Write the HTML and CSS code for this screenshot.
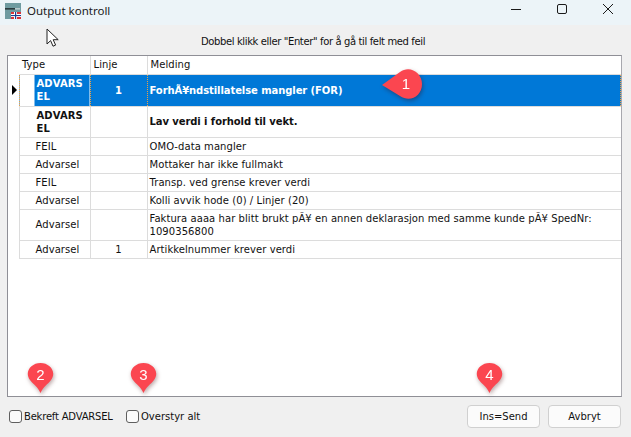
FILE: index.html
```html
<!DOCTYPE html>
<html lang="no">
<head>
<meta charset="utf-8">
<title>Output kontroll</title>
<link rel="stylesheet" href="styles.css">
</head>
<body>
<div class="window">
  <header class="titlebar">
    <svg class="app-icon" width="16" height="16" viewBox="0 0 16 16">
      <rect width="16" height="16" fill="#6f9ba0"/>
      <rect x="0" y="5" width="10" height="1.6" fill="#2b3a3d"/>
      <rect x="10" y="5" width="5" height="1.6" fill="#b8c8ca"/>
      <rect x="6" y="9" width="10" height="7" fill="#d8353a"/>
      <rect x="9" y="9" width="3" height="7" fill="#fff"/>
      <rect x="6" y="11" width="10" height="3" fill="#fff"/>
      <rect x="10" y="9" width="1.2" height="7" fill="#1d3f8f"/>
      <rect x="6" y="12" width="10" height="1.1" fill="#1d3f8f"/>
    </svg>
    <span class="title">Output kontroll</span>
    <div class="controls">
      <svg class="ctl" width="46" height="25" viewBox="0 0 46 25"><path d="M18 9.5h10" stroke="#1a1a1a" fill="none"/></svg>
      <svg class="ctl" width="46" height="25" viewBox="0 0 46 25"><rect x="18.5" y="4.5" width="9" height="9" rx="1.5" stroke="#1a1a1a" fill="none"/></svg>
      <svg class="ctl" width="46" height="25" viewBox="0 0 46 25"><path d="M18 4l10 10M28 4l-10 10" stroke="#1a1a1a" fill="none"/></svg>
    </div>
  </header>
  <main class="content">
    <p class="hint">Dobbel klikk eller "Enter" for å gå til felt med feil</p>
    <section class="panel">
      <table class="grid">
        <colgroup><col class="c-h"><col class="c-type"><col class="c-line"><col></colgroup>
        <thead>
          <tr><th class="rowhead"></th><th>Type</th><th>Linje</th><th>Melding</th></tr>
        </thead>
        <tbody>
          <tr class="r-sel"><td class="rowhead"><span class="arrow"></span></td><td class="type">ADVARS<br>EL</td><td class="line">1</td><td>ForhÃ¥ndstillatelse mangler (FOR)</td></tr>
          <tr class="r-bold"><td class="rowhead"></td><td class="type">ADVARS<br>EL</td><td class="line"></td><td>Lav verdi i forhold til vekt.</td></tr>
          <tr><td class="rowhead"></td><td class="type">FEIL</td><td class="line"></td><td>OMO-data mangler</td></tr>
          <tr><td class="rowhead"></td><td class="type">Advarsel</td><td class="line"></td><td>Mottaker har ikke fullmakt</td></tr>
          <tr><td class="rowhead"></td><td class="type">FEIL</td><td class="line"></td><td>Transp. ved grense krever verdi</td></tr>
          <tr><td class="rowhead"></td><td class="type">Advarsel</td><td class="line"></td><td>Kolli avvik hode (0) / Linjer (20)</td></tr>
          <tr class="r-tall"><td class="rowhead"></td><td class="type">Advarsel</td><td class="line"></td><td>Faktura aaaa har blitt brukt pÃ¥ en annen deklarasjon med samme kunde pÃ¥ SpedNr:<br>1090356800</td></tr>
          <tr><td class="rowhead"></td><td class="type">Advarsel</td><td class="line">1</td><td>Artikkelnummer krever verdi</td></tr>
        </tbody>
      </table>
    </section>
    <footer class="actions">
      <label class="check c-a"><span class="box"></span>Bekreft ADVARSEL</label>
      <label class="check"><span class="box"></span>Overstyr alt</label>
      <span class="spacer"></span>
      <button class="btn">Ins=Send</button>
      <button class="btn">Avbryt</button>
    </footer>
  </main>

  <svg class="cursor" width="14" height="20" viewBox="0 0 14 20"><path d="M1 1v15l3.6-3.4 2.4 5.6 2.6-1.1-2.4-5.4h5z" fill="#fff" stroke="#222"/></svg>

  <div class="callout"><svg width="40" height="32" viewBox="0 0 40 32"><path d="M0 17 L18 4 C28 -3 40 5 40 16 C40 28 28 35 18 28 Z" fill="#fb4650"/></svg><span>1</span></div>
  <div class="pin p2"><svg width="27" height="30" viewBox="0 0 27 30"><path d="M13.5 30 C11 24 6 21 3 17 C-3 9 4 0 13.5 0 C23 0 30 9 24 17 C21 21 16 24 13.5 30 Z" fill="#fb4650"/></svg><span>2</span></div>
  <div class="pin p3"><svg width="27" height="30" viewBox="0 0 27 30"><path d="M13.5 30 C11 24 6 21 3 17 C-3 9 4 0 13.5 0 C23 0 30 9 24 17 C21 21 16 24 13.5 30 Z" fill="#fb4650"/></svg><span>3</span></div>
  <div class="pin p4"><svg width="27" height="30" viewBox="0 0 27 30"><path d="M13.5 30 C11 24 6 21 3 17 C-3 9 4 0 13.5 0 C23 0 30 9 24 17 C21 21 16 24 13.5 30 Z" fill="#fb4650"/></svg><span>4</span></div>
</div>
</body>
</html>
```
FILE: styles.css
```css
* { box-sizing: border-box; }
html, body { margin: 0; padding: 0; }
body { width: 631px; height: 437px; overflow: hidden; font-family: "DejaVu Sans", sans-serif; font-size: 10px; color: #111; }
.window { position: relative; width: 631px; height: 437px; background: #f0f0f0; display: flex; flex-direction: column; }

.titlebar { height: 25px; flex: none; background: #ecf4f8; display: flex; align-items: center; padding-left: 5px; }
.app-icon { flex: none; margin-bottom: 3px; }
.title { margin-left: 6px; margin-bottom: 4px; font-family: "Noto Sans", sans-serif; font-size: 11.5px; color: #1a1a1a; }
.controls { margin-left: auto; display: flex; }
.ctl { display: block; }

.content { flex: 1; display: flex; flex-direction: column; padding: 0 9px 0 7px; min-height: 0; }
.hint { margin: 10px 0 0; height: 20px; line-height: 14px; text-align: center; padding-right: 3px; letter-spacing: -0.37px; }
.panel { height: 342px; flex: none; background: #fff; border: 1px solid #8f8f96; border-right-color: #a8a8ae; }

.grid { border-collapse: collapse; table-layout: fixed; width: 100%; background: #fff; letter-spacing: 0.07px; }
.c-h { width: 11px; }
.c-type { width: 71px; }
.c-line { width: 57px; }
.grid th, .grid td { border: 1px solid #dcdcdc; padding: 0 2px; font-weight: normal; text-align: left; vertical-align: middle; line-height: 13px; }
.grid th { height: 18px; padding-left: 3px; border-width: 0 1px 1px 0; }
.grid th:last-child { border-right: 0; }
.grid td { height: 18px; }
.grid thead th.rowhead { border: 0; }
.grid .rowhead { border: 0; background: #fff; padding: 0; }
.grid td.type { padding-left: 16px; }
.grid .line { text-align: center; }
.grid td:last-child { border-right: 0; }

.r-sel td, .r-bold td { height: 31px; font-weight: bold; letter-spacing: -0.08px; }
.grid .r-sel td { height: 32px; }
.grid .r-sel td.type, .grid .r-bold td.type { letter-spacing: 0.1px; padding-left: 17px; }
.r-sel td:not(.rowhead) { background: #0078d7; color: #fff; border: 1px dotted #f0a040; }
.grid .r-sel td.type { background: linear-gradient(90deg, #fff 15px, #0078d7 15px); }
.r-tall td { height: 31px; }
.arrow { display: block; width: 0; height: 0; margin-left: 4px; border-left: 5px solid #000; border-top: 5px solid transparent; border-bottom: 5px solid transparent; }

.actions { flex: 1; display: flex; align-items: flex-start; padding: 8px 1px 0 2px; }
.check { display: flex; align-items: center; height: 22px; }
.c-a { width: 117px; letter-spacing: -0.2px; }
.box { flex: none; width: 13px; height: 13px; margin-right: 2px; border: 1px solid #5f5f5f; border-radius: 3px; background: #fbfbfb; }
.spacer { flex: 1; }
.btn { width: 73px; height: 23px; margin-left: 8px; padding: 0; background: #fbfbfb; border: 1px solid #d0d0d0; border-radius: 4px; font: inherit; color: #111; }

.cursor { position: absolute; left: 46px; top: 28px; }

.callout { position: absolute; left: 382px; top: 68px; width: 40px; height: 32px; filter: drop-shadow(1px 2px 2px rgba(60,0,0,.35)); }
.callout svg, .pin svg { display: block; overflow: visible; }
.callout span { position: absolute; left: 14px; top: 6px; width: 20px; text-align: center; color: #fff; font: 15px/20px "Liberation Sans", sans-serif; }

.pin { position: absolute; width: 27px; height: 30px; filter: drop-shadow(1px 2px 2px rgba(60,0,0,.35)); }
.pin span { position: absolute; left: 0; top: 4px; width: 100%; text-align: center; color: #fff; font: 15px/16px "Liberation Sans", sans-serif; }
.p2 { left: 27px; top: 363px; }
.p3 { left: 130px; top: 363px; }
.p4 { left: 476px; top: 363px; }
```
